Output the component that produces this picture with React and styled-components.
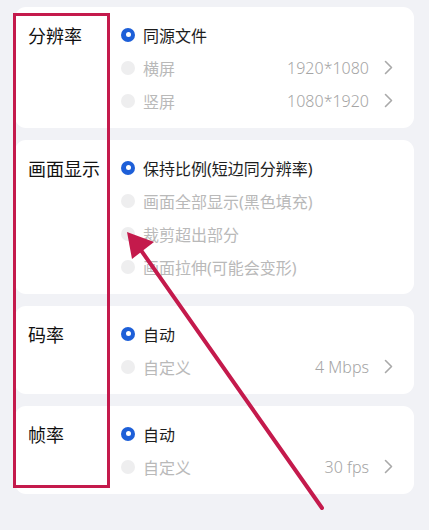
import styled, { createGlobalStyle } from "styled-components";

const GlobalStyle = createGlobalStyle`
    body {
        margin: 0;
        background: #f1f2f6;
        font-family: "Noto Sans", "Noto Sans CJK SC", sans-serif;
    }
`

const Page = styled.div`
    position: relative;
    min-height: 530px;
    box-sizing: border-box;
    padding: 7px 15px 0 15px;
    display: flex;
    flex-direction: column;
    gap: 12px;
    background: #f1f2f6;
`

const Card = styled.div`
    display: grid;
    grid-template-columns: 93px 1fr;
    padding: 11px 21px 11px 13px;
    background: #ffffff;
    border-radius: 11px;
`

const Label = styled.div`
    padding-top: 2px;
    line-height: 33px;
    font-size: 18px;
    font-weight: 400;
    color: #111111;
`

const Options = styled.div`
    display: flex;
    flex-direction: column;
`

const Row = styled.div`
    height: 33px;
    display: flex;
    align-items: center;
    gap: 8px;
    font-size: 16px;
    color: ${(p) => (p.$on ? "#1e1e1e" : "#b9b9b9")};
`

const Radio = styled.span`
    width: 14px;
    height: 14px;
    border-radius: 50%;
    flex-shrink: 0;
    background: ${(p) => (p.$on ? "#1d5fd8" : "#eeeeef")};
    display: flex;
    align-items: center;
    justify-content: center;

    &::after {
        content: "";
        width: 5px;
        height: 5px;
        border-radius: 50%;
        background: ${(p) => (p.$on ? "#ffffff" : "transparent")};
    }
`

const Text = styled.span`
    flex: 1;
`

const Value = styled.span`
    color: #a5a5a5;
    font-size: 16px;
    font-weight: 300;
    margin-right: 7px;
`

const Marker = styled.div`
    position: absolute;
    left: 13px;
    top: 13px;
    width: 97px;
    height: 475px;
    box-sizing: border-box;
    border: 3px solid #c41a4c;
    pointer-events: none;
`

const Overlay = styled.svg`
    position: absolute;
    left: 0;
    top: 0;
    pointer-events: none;
`

const Chevron = () => (
    <svg width="9" height="15" viewBox="0 0 9 15">
        <polyline points="1.5,1.5 7.5,7.5 1.5,13.5" fill="none" stroke="#a9a9a9" strokeWidth="1.6" strokeLinecap="round" strokeLinejoin="round" />
    </svg>
)

const groups = [
    {
        label: "分辨率",
        rows: [
            { text: "同源文件", on: true },
            { text: "横屏", value: "1920*1080" },
            { text: "竖屏", value: "1080*1920" },
        ],
    },
    {
        label: "画面显示",
        rows: [
            { text: "保持比例(短边同分辨率)", on: true },
            { text: "画面全部显示(黑色填充)" },
            { text: "裁剪超出部分" },
            { text: "画面拉伸(可能会变形)" },
        ],
    },
    {
        label: "码率",
        rows: [
            { text: "自动", on: true },
            { text: "自定义", value: "4 Mbps" },
        ],
    },
    {
        label: "帧率",
        rows: [
            { text: "自动", on: true },
            { text: "自定义", value: "30 fps" },
        ],
    },
]

const App = () => {
    return (
        <Page>
            <GlobalStyle />
            {groups.map((g) => (
                <Card key={g.label}>
                    <Label>{g.label}</Label>
                    <Options>
                        {g.rows.map((r) => (
                            <Row key={r.text} $on={r.on}>
                                <Radio $on={r.on} />
                                <Text>{r.text}</Text>
                                {r.value && <Value>{r.value}</Value>}
                                {r.value && <Chevron />}
                            </Row>
                        ))}
                    </Options>
                </Card>
            ))}
            <Marker />
            <Overlay width="429" height="530" viewBox="0 0 429 530">
                <line x1="322" y1="508" x2="138" y2="246" stroke="#c41a4c" strokeWidth="4" strokeLinecap="round" />
                <polygon points="127,232 154,242 132,259" fill="#c41a4c" />
            </Overlay>
        </Page>
    )
}

export default App;
